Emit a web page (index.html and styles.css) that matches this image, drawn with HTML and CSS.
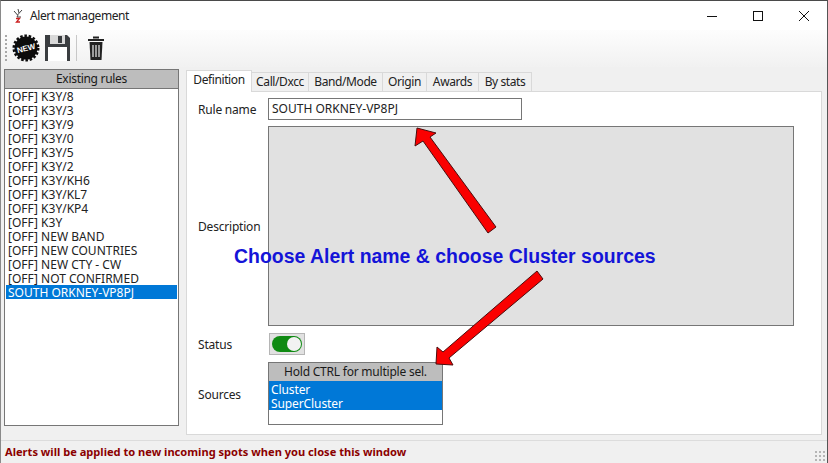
FILE: index.html
```html
<!DOCTYPE html>
<html lang="en">
<head>
<meta charset="utf-8">
<title>Alert management</title>
<link rel="stylesheet" href="styles.css">
</head>
<body>
<div class="window">
  <header class="titlebar">
    <svg class="app-icon" width="16" height="18" viewBox="0 0 16 18"><path d="M8 2 9 6M4 4l3.500 4L12 3M8 8l-1 2h4" fill="none" stroke="#444" stroke-width="1"/><path d="M6 11.500h3.500L6.500 15h3.500" fill="none" stroke="#c22" stroke-width="1.300"/></svg>
    <span class="title">Alert management</span>
    <div class="controls">
      <svg width="12" height="12" viewBox="0 0 12 12"><path d="M1 6.500h10" stroke="#111" stroke-width="1"/></svg>
      <svg width="12" height="12" viewBox="0 0 12 12"><rect x="1.500" y="1.500" width="9" height="9" fill="none" stroke="#111"/></svg>
      <svg width="12" height="12" viewBox="0 0 12 12"><path d="M1 1l10 10M11 1 1 11" stroke="#111" stroke-width="1"/></svg>
    </div>
  </header>

  <div class="toolbar">
    <span class="grip"></span>
    <svg class="tool-new" width="28" height="28" viewBox="0 0 28 28">
      <circle cx="14" cy="14" r="11.500" fill="#0c0c0c"/>
      <circle cx="14" cy="14" r="12" fill="none" stroke="#0c0c0c" stroke-width="3" stroke-dasharray="2.500 1.700"/>
      <text class="new-text" x="14" y="17" text-anchor="middle" transform="rotate(-14 14 14)">NEW</text>
    </svg>
    <svg class="tool-save" width="26" height="28" viewBox="0 0 26 28">
      <path d="M0 1h22l3 3v23H0z" fill="#3a3d40"/>
      <rect x="5" y="1" width="15" height="9" fill="#d8d8d8"/>
      <rect x="13" y="2" width="4" height="7" fill="#3a3d40"/>
      <rect x="3" y="13" width="19" height="14" fill="#fff"/>
    </svg>
    <span class="tool-sep"></span>
    <svg class="tool-trash" width="18" height="26" viewBox="0 0 18 26">
      <path d="M6 2.500h6M1 5h16" stroke="#222" stroke-width="2.200" fill="none"/>
      <path d="M2.500 7h13l-1 18h-11z" fill="#222"/>
      <path d="M6 10v12M9 10v12M12 10v12" stroke="#ddd" stroke-width="1.300"/>
    </svg>
  </div>

  <main class="content">
    <aside class="rules">
      <div class="list-head">Existing rules</div>
      <ul class="list">
        <li>[OFF] K3Y/8</li>
        <li>[OFF] K3Y/3</li>
        <li>[OFF] K3Y/9</li>
        <li>[OFF] K3Y/0</li>
        <li>[OFF] K3Y/5</li>
        <li>[OFF] K3Y/2</li>
        <li>[OFF] K3Y/KH6</li>
        <li>[OFF] K3Y/KL7</li>
        <li>[OFF] K3Y/KP4</li>
        <li>[OFF] K3Y</li>
        <li>[OFF] NEW BAND</li>
        <li>[OFF] NEW COUNTRIES</li>
        <li>[OFF] NEW CTY - CW</li>
        <li>[OFF] NOT CONFIRMED</li>
        <li class="selected">SOUTH ORKNEY-VP8PJ</li>
      </ul>
    </aside>

    <section class="editor">
      <nav class="tabs">
        <span class="tab active">Definition</span>
        <span class="tab tab-call">Call/Dxcc</span>
        <span class="tab tab-band">Band/Mode</span>
        <span class="tab tab-origin">Origin</span>
        <span class="tab tab-awards">Awards</span>
        <span class="tab tab-stats">By stats</span>
      </nav>
      <div class="pane">
        <div class="row row-name">
          <label>Rule name</label>
          <div class="input">SOUTH ORKNEY-VP8PJ</div>
        </div>
        <div class="row row-desc">
          <label>Description</label>
          <div class="desc"></div>
        </div>
        <div class="row row-status">
          <label>Status</label>
          <div class="toggle-box"><span class="toggle"><span class="knob"></span></span></div>
        </div>
        <div class="row row-sources">
          <label>Sources</label>
          <div class="sources">
            <div class="sources-head">Hold CTRL for multiple sel.</div>
            <ul class="sources-list">
              <li>Cluster</li>
              <li>SuperCluster</li>
            </ul>
          </div>
        </div>
      </div>
    </section>
  </main>

  <footer class="status">
    <span>Alerts will be applied to new incoming spots when you close this window</span>
    <span class="size-grip"></span>
  </footer>

  <svg class="arrows" width="828" height="463" viewBox="0 0 828 463">
    <path class="arrow" d="M417 128 436 133 430 137 496 227 488 233 423 141 415 146Z"/>
    <path class="arrow" d="M436 364 437 347 443 352 537 271 543 279 449 358 453 365Z"/>
  </svg>
  <div class="callout">Choose Alert name &amp; choose Cluster sources</div>
</div>
</body>
</html>
```

FILE: styles.css
```css
* { box-sizing: border-box; }
html, body { margin: 0; padding: 0; }
body { width: 828px; height: 463px; overflow: hidden; background: #fff; }

.window {
  position: relative;
  width: 828px;
  height: 463px;
  display: flex;
  flex-direction: column;
  background: #f0f0f0;
  border-top: 1px solid #4a4a4a;
  border-left: 1px solid #8a8a8a;
  border-right: 1px solid #555;
  font-family: "Noto Sans", "Open Sans", sans-serif;
  font-size: 12px;
  color: #1a1a1a;
}

.titlebar {
  height: 29px;
  flex: none;
  display: flex;
  align-items: center;
  padding-left: 9px;
  background: #fff;
}
.app-icon { flex: none; }
.title { margin-left: 4px; color: #222; letter-spacing: -0.44px; }
.controls { margin-left: auto; display: flex; gap: 34px; padding-right: 17px; }
.controls svg { display: block; }

.toolbar {
  height: 37px;
  flex: none;
  display: flex;
  align-items: center;
  padding: 0 0 2px 4px;
  background: linear-gradient(#fdfdfd, #f1f1f1);
}
.grip {
  width: 2px;
  height: 26px;
  background: repeating-linear-gradient(#a8a8a8 0 2px, transparent 2px 4px);
}
.tool-new { margin-left: 5px; flex: none; }
.new-text { font: 800 8px "Liberation Sans", sans-serif; fill: #fff; }
.tool-save { margin-left: 5px; flex: none; }
.tool-sep { width: 1px; height: 26px; margin-left: 5px; background: #c8c8c8; }
.tool-trash { margin-left: 10px; flex: none; }

.content {
  height: 373px;
  flex: none;
  display: flex;
  padding-left: 3px;
}

.rules { width: 175px; flex: none; margin-top: 2px; height: 357px; display: flex; flex-direction: column; }
.list-head {
  height: 19px;
  flex: none;
  background: #bdbdbd;
  border: 1px solid #767676;
  border-bottom: 0;
  text-align: center;
  line-height: 18px;
  letter-spacing: -0.3px;
}
.list {
  flex: 1;
  margin: 0;
  padding: 0 1px;
  list-style: none;
  background: #fff;
  border: 1px solid #767676;
  font-size: 12px;
  line-height: 15px;
}
.list li { height: 14px; padding-left: 2px; white-space: nowrap; color: #222; }
.list .selected { background: #0078d7; color: #fff; }

.editor { width: 636px; flex: none; margin-left: 7px; display: flex; flex-direction: column; }
.tabs { height: 24px; flex: none; display: flex; align-items: flex-end; }
.tab {
  height: 19px;
  line-height: 17px;
  background: #f0f0f0;
  border: 1px solid #d9d9d9;
  border-left: 0;
  border-bottom: 0;
  text-align: center;
  color: #222;
  letter-spacing: -0.4px;
}
.tab.active { width: 66px; height: 22px; line-height: 18px; background: #fff; border: 1px solid #d9d9d9; border-bottom: 0; position: relative; z-index: 1; margin-bottom: -1px; }
.tab-call { width: 57px; }
.tab-band { width: 74px; }
.tab-origin { width: 44px; }
.tab-awards { width: 52px; }
.tab-stats { width: 53px; }

.pane {
  width: 636px;
  height: 344px;
  padding: 6px 0 0 11px;
  background: #fff;
  border: 1px solid #d9d9d9;
}
.row { display: flex; align-items: center; }
.row label { width: 70px; flex: none; color: #222; letter-spacing: -0.2px; }
.input {
  width: 254px;
  height: 22px;
  padding-left: 3px;
  line-height: 19px;
  border: 1px solid #767676;
  color: #222;
}
.row-desc { margin-top: 6px; }
.desc { width: 526px; height: 200px; background: #e1e1e1; border: 1px solid #767676; }
.row-status { margin-top: 7px; }
.toggle-box {
  width: 36px;
  height: 22px;
  margin-left: 1px;
  display: flex;
  align-items: center;
  justify-content: center;
  background: #e1e1e1;
  border: 1px solid #b5b5b5;
}
.toggle { display: block; width: 30px; height: 16px; padding: 1px; border-radius: 8px; background: #0f8a12; }
.knob { display: block; width: 14px; height: 14px; margin-left: auto; border-radius: 50%; background: #f2f2f2; }
.row-sources { margin-top: 7px; }
.row-sources label { padding-top: 2px; }
.sources { width: 175px; height: 63px; display: flex; flex-direction: column; border: 1px solid #767676; }
.sources-head { height: 18px; flex: none; background: #bdbdbd; text-align: center; line-height: 17px; letter-spacing: -0.22px; }
.sources-list { flex: 1; margin: 0; padding: 0; list-style: none; background: #fff; line-height: 16px; letter-spacing: -0.1px; }
.sources-list li { height: 14px; padding-left: 2px; background: #0078d7; color: #fff; }
.sources-list li:first-child { height: 15px; padding-top: 1px; }

.status {
  flex: 1;
  position: relative;
  display: flex;
  align-items: center;
  padding: 0 0 1px 4px;
  border-top: 1px solid #dcdcdc;
  background: #f0f0f0;
  font-weight: 700;
  font-size: 11.1px;
  color: #8b0000;
}
.size-grip {
  position: absolute;
  right: 2px;
  bottom: 2px;
  width: 11px;
  height: 11px;
  background-image: radial-gradient(#b5b5b5 1px, transparent 1.200px);
  background-size: 4px 4px;
}

.arrows { position: absolute; left: -1px; top: -1px; pointer-events: none; }
.arrow { fill: #fa0000; stroke: #4a0d0d; stroke-width: 1; stroke-linejoin: miter; }
.callout {
  position: absolute;
  left: 233px;
  top: 243px;
  font: 700 19.45px/24px "Liberation Sans", Arial, sans-serif;
  color: #1414d8;
  white-space: nowrap;
}
```
